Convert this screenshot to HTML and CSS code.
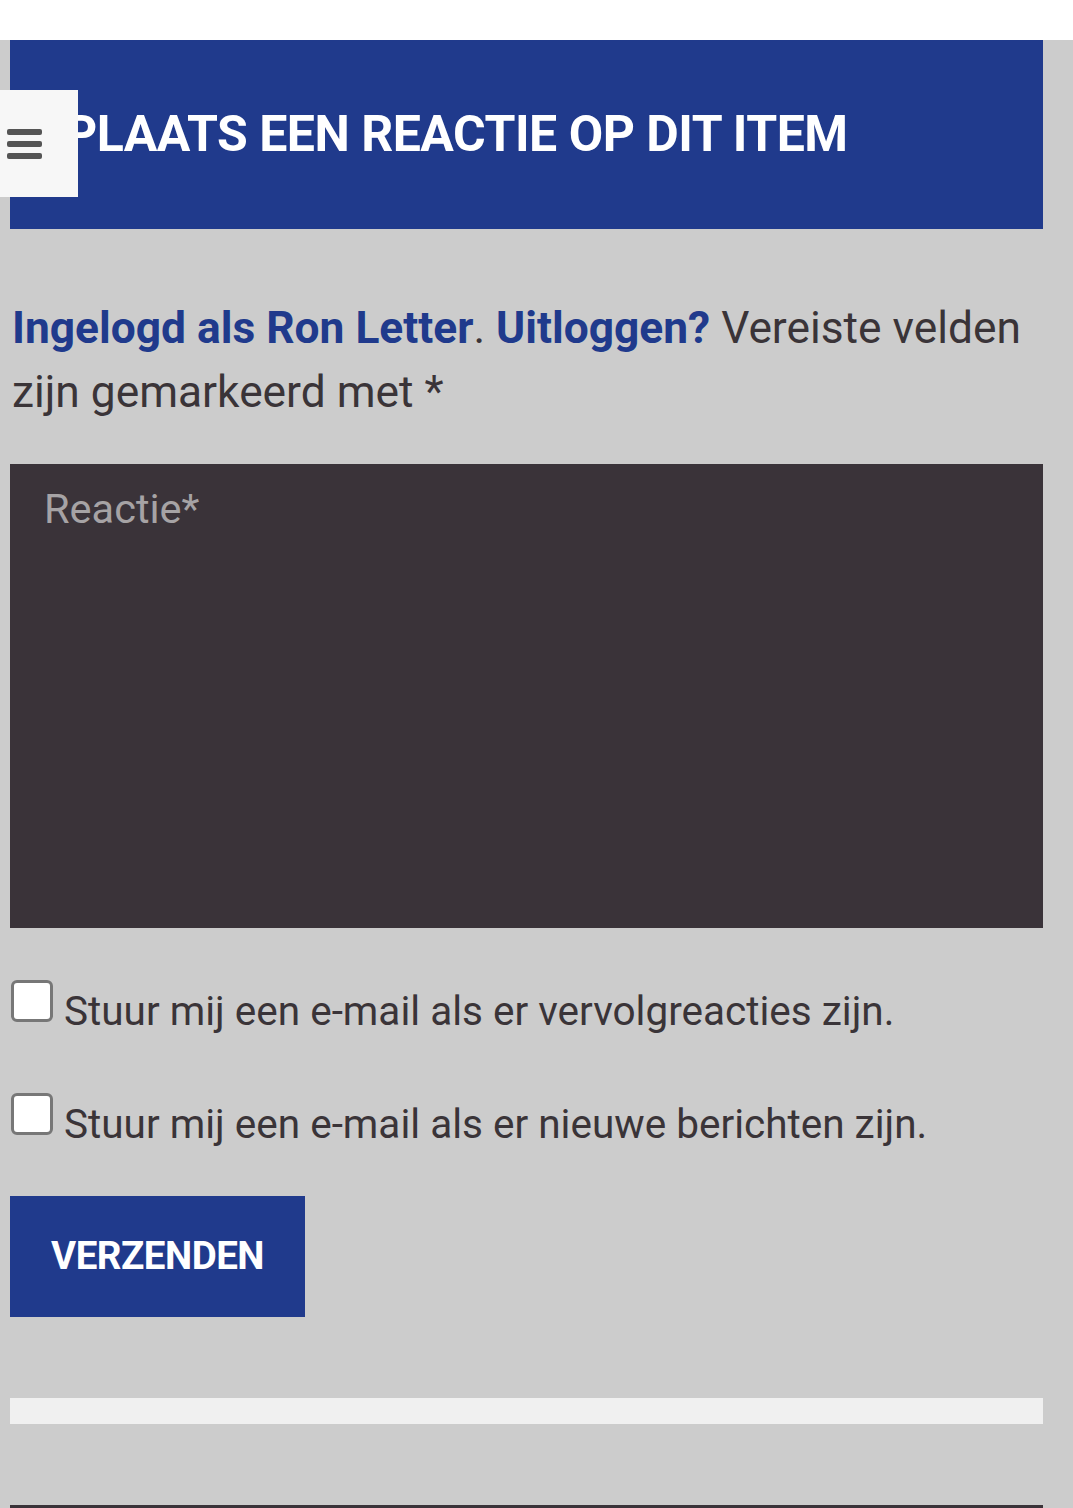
FILE: index.html
```html
<!DOCTYPE html>
<html lang="nl">
<head>
<meta charset="UTF-8">
<meta name="viewport" content="width=device-width, initial-scale=1.0">
<title>Plaats een reactie</title>
<link rel="stylesheet" href="styles.css">
</head>
<body>

<div class="topbar"></div>

<button class="menu-toggle" type="button" aria-label="Menu">
  <span></span><span></span><span></span>
</button>

<div class="page">
  <div class="reply-title">
    <h3>PLAATS EEN REACTIE OP DIT ITEM</h3>
  </div>

  <p class="logged-in">
    <a href="#">Ingelogd als Ron Letter</a>. <a href="#">Uitloggen?</a> Vereiste velden zijn gemarkeerd met *
  </p>

  <form class="comment-form">
    <textarea class="comment-field" placeholder="Reactie*"></textarea>

    <label class="check-row">
      <input type="checkbox">
      <span>Stuur mij een e-mail als er vervolgreacties zijn.</span>
    </label>
    <label class="check-row">
      <input type="checkbox">
      <span>Stuur mij een e-mail als er nieuwe berichten zijn.</span>
    </label>

    <button type="button" class="submit">VERZENDEN</button>
  </form>

  <div class="light-bar"></div>
  <div class="dark-line"></div>
</div>

</body>
</html>
```

FILE: styles.css
```css
html, body {
  margin: 0;
  padding: 0;
  background: #fff;
}
body {
  font-family: Roboto, "Noto Sans", Arial, sans-serif;
  color: #3a3438;
}
.topbar {
  height: 40px;
  background: #fff;
}
.page {
  background: #cccccc;
  padding: 0 30px 0 10px;
  overflow: hidden;
  height: 1468px;
}
.reply-title {
  background: #203a8c;
  height: 189px;
  box-sizing: border-box;
  padding: 64px 20px 0 55px;
}
.reply-title h3 {
  margin: 0;
  color: #fff;
  font-size: 50px;
  line-height: 1.2;
  font-weight: 700;
  letter-spacing: -0.5px;
}
.menu-toggle {
  position: absolute;
  left: 0;
  top: 90px;
  width: 78px;
  height: 107px;
  background: #f7f7f7;
  border: none;
  padding: 0 0 0 7px;
  display: flex;
  flex-direction: column;
  justify-content: center;
  gap: 6px;
}
.menu-toggle span {
  display: block;
  width: 35px;
  height: 6px;
  border-radius: 2px;
  background: #555;
}
.logged-in {
  margin: 67px 0 40px 2px;
  font-size: 44.3px;
  line-height: 64px;
}
.logged-in a {
  color: #203a8c;
  font-weight: 700;
  text-decoration: none;
}
.comment-field {
  display: block;
  width: 100%;
  height: 464px;
  box-sizing: border-box;
  margin: 0;
  background: #3a3339;
  border: none;
  padding: 20px 34px;
  font-family: inherit;
  font-size: 41.5px;
  color: #eee;
  resize: none;
}
.comment-field::placeholder {
  color: #a6a3a5;
}
.check-row {
  display: flex;
  align-items: center;
  height: 46px;
  margin-top: 50px;
  font-size: 40.5px;
}
.check-row + .check-row {
  margin-top: 67px;
}
.check-row input {
  appearance: none;
  -webkit-appearance: none;
  width: 42px;
  height: 42px;
  margin: 0 11px 0 1px;
  box-sizing: border-box;
  background: #fff;
  border: 3px solid #777;
  border-radius: 6px;
  flex: none;
}
.check-row span {
  position: relative;
  top: 10px;
}
.submit {
  display: block;
  margin-top: 59px;
  width: 295px;
  height: 121px;
  background: #203a8c;
  color: #fff;
  border: none;
  font-family: inherit;
  font-size: 38.5px;
  font-weight: 700;
  letter-spacing: -0.5px;
  padding: 0 0 2px;
}
.light-bar {
  margin-top: 81px;
  height: 26px;
  background: #f0f0f0;
}
.dark-line {
  margin-top: 81px;
  height: 6px;
  background: #3a3339;
}
```
